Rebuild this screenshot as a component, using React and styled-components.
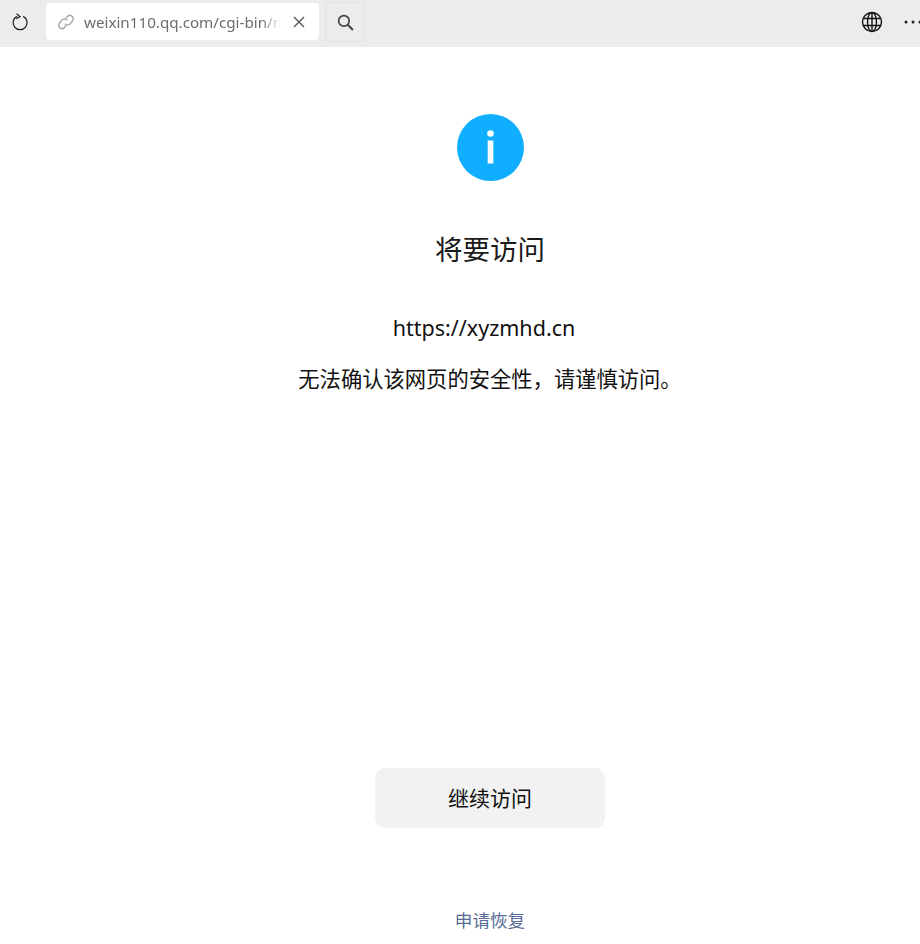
import React from "react";
import styled, { createGlobalStyle } from "styled-components";

const Global = createGlobalStyle`
  html, body { margin: 0; padding: 0; background: #fff; overflow: hidden; }
  body { font-family: "Noto Sans", "Open Sans", "Noto Sans CJK SC", sans-serif; }
`;
const CJK = `"Noto Sans CJK SC", "Noto Sans", sans-serif`;

const Page = styled.div`
  width: 920px;
  height: 944px;
  overflow: hidden;
  display: flex;
  flex-direction: column;
`;
const Toolbar = styled.header`
  height: 47px;
  flex: none;
  background: #ececec;
  display: flex;
  align-items: center;
  box-sizing: border-box;
  padding: 0 0 4px 10px;
`;
const Reload = styled.button`
  width: 20px;
  height: 20px;
  padding: 0;
  border: 0;
  background: none;
  display: flex;
  margin-top: 1px;
  margin-right: 16px;
`;
const Address = styled.div`
  width: 273px;
  height: 37px;
  box-sizing: border-box;
  background: #fff;
  border-radius: 4px;
  display: flex;
  align-items: center;
  padding: 0 13px 0 11px;
`;
const UrlText = styled.span`
  flex: 1;
  margin: 0 11px 0 9px;
  font-family: "Noto Sans", sans-serif;
  font-size: 15.2px;
  color: #6b6b6b;
  white-space: nowrap;
  overflow: hidden;
  -webkit-mask-image: linear-gradient(to right, #000 90%, transparent 100%);
  mask-image: linear-gradient(to right, #000 90%, transparent 100%);
`;
const SearchButton = styled.button`
  width: 40px;
  height: 40px;
  margin: 1px 0 0 6px;
  padding: 0;
  box-sizing: border-box;
  background: #ececec;
  border: 1px solid #e2e2e2;
  border-radius: 4px;
  display: flex;
  align-items: center;
  justify-content: center;
`;
const Right = styled.div`
  margin-left: auto;
  display: flex;
  align-items: center;
  gap: 20px;
  margin-top: 1px;
  margin-right: -3px;
`;
const Main = styled.main`
  width: 980px;
  flex: none;
  height: 897px;
  box-sizing: border-box;
  padding-top: 66.5px;
  display: flex;
  flex-direction: column;
  align-items: center;
  text-align: center;
  color: #111;
`;
const Title = styled.h1`
  margin: 47.5px 0 0;
  font: 400 27.5px/40px ${CJK};
  color: #1a1a1a;
`;
const Link = styled.p`
  margin: 45px 12px 0 0;
  font: 400 21.5px/30px "Noto Sans", ${CJK};
  color: #111;
`;
const Warning = styled.p`
  margin: 20px 0 0;
  font: 400 21.3px/30px ${CJK};
  color: #111;
`;
const Continue = styled.button`
  width: 230px;
  height: 60px;
  margin-top: 375px;
  padding: 0 0 2px;
  border: 0;
  border-radius: 10px;
  background: #f2f2f2;
  font: 400 21px/30px ${CJK};
  color: #111;
`;
const Restore = styled.a`
  margin-top: 79px;
  font: 400 17.6px/26px ${CJK};
  color: #576b95;
`;

export default function App() {
  return (
    <Page>
      <Global />
      <Toolbar>
        <Reload aria-label="刷新">
          <svg width="20" height="20" viewBox="0 0 20 20" fill="none" stroke="#1a1a1a" strokeWidth="1.2">
            <path d="M7 4.4a7 7 0 1 0 6.2 0" />
            <path d="M6.6 1.8 L10 4.6 L6.4 6.8" />
          </svg>
        </Reload>
        <Address>
          <svg width="18" height="18" viewBox="0 0 24 24" fill="none" stroke="#a8a8a8" strokeWidth="2" strokeLinecap="round">
            <path d="M11 15a4.5 4.5 0 0 0 6.5-.5l3.5-4.5a4.5 4.5 0 0 0-7-5.5l-1.5 2" />
            <path d="M13 9a4.5 4.5 0 0 0-6.5.5L3 14a4.5 4.5 0 0 0 7 5.5l1.5-2" />
          </svg>
          <UrlText>weixin110.qq.com/cgi-bin/mmspamsupport</UrlText>
          <svg width="14" height="14" viewBox="0 0 14 14" stroke="#555" strokeWidth="1.4">
            <path d="M2 2l10 10M12 2L2 12" />
          </svg>
        </Address>
        <SearchButton aria-label="搜索">
          <svg width="19" height="19" viewBox="0 0 18 18" fill="none" stroke="#444" strokeWidth="1.6">
            <circle cx="7.5" cy="7.5" r="5" />
            <path d="M11.2 11.2 L16 16" strokeWidth="2" />
          </svg>
        </SearchButton>
        <Right>
          <svg width="22" height="22" viewBox="0 0 22 22" fill="none" stroke="#111" strokeWidth="1.4">
            <circle cx="11" cy="11" r="9.5" />
            <ellipse cx="11" cy="11" rx="4.5" ry="9.5" />
            <path d="M2.5 7.5h17M2.5 14.5h17M11 1.5v19" />
          </svg>
          <svg width="20" height="6" viewBox="0 0 20 6" fill="#222">
            <circle cx="3" cy="3" r="1.5" />
            <circle cx="10" cy="3" r="1.5" />
            <circle cx="17" cy="3" r="1.5" />
          </svg>
        </Right>
      </Toolbar>
      <Main>
        <svg width="67" height="67" viewBox="0 0 67 67">
          <circle cx="33.5" cy="33.5" r="33.5" fill="#10aeff" />
          <circle cx="33.5" cy="19.5" r="3.3" fill="#fff" />
          <rect x="30.7" y="26.5" width="5.6" height="23" fill="#fff" />
        </svg>
        <Title>将要访问</Title>
        <Link>https://xyzmhd.cn</Link>
        <Warning>无法确认该网页的安全性，请谨慎访问。</Warning>
        <Continue>继续访问</Continue>
        <Restore>申请恢复</Restore>
      </Main>
    </Page>
  );
}
